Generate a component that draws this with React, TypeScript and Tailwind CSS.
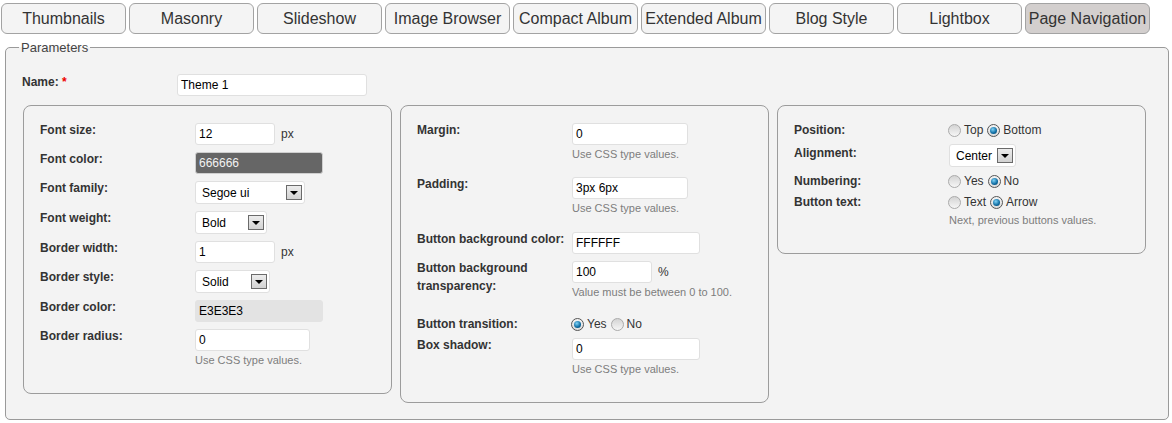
import React from 'react';

const tabs = [
  'Thumbnails',
  'Masonry',
  'Slideshow',
  'Image Browser',
  'Compact Album',
  'Extended Album',
  'Blog Style',
  'Lightbox',
  'Page Navigation',
];

const Radio = ({ checked, label }: { checked?: boolean; label: string }) => (
  <span className="mr-[4px] inline-flex items-center">
    <span
      className={`mr-[3px] inline-flex h-[13px] w-[13px] items-center justify-center rounded-full border ${
        checked
          ? 'border-[#555] bg-gradient-to-b from-[#f4f4f4] to-[#dcdcdc]'
          : 'border-[#aaa] bg-gradient-to-b from-[#d4d4d4] to-[#f6f6f6]'
      }`}
    >
      {checked && (
        <span className="h-[7px] w-[7px] rounded-full bg-[radial-gradient(circle_at_40%_35%,#7fd3f7,#0d6aa0_60%,#07405f)]" />
      )}
    </span>
    <span>{label}</span>
  </span>
);

const Arrow = () => (
  <span className="flex h-[15px] w-[16px] shrink-0 items-center justify-center border border-[#6a6a6a] bg-gradient-to-b from-[#ececec] to-[#d2d2d2]">
    <span className="h-0 w-0 border-x-[4px] border-t-[4px] border-x-transparent border-t-black" />
  </span>
);

const Input = ({ value, w, className = '' }: { value: string; w: string; className?: string }) => (
  <div
    className={`flex h-[22px] items-center rounded-[3px] border px-[3px] text-[12px] ${w} ${
      className || 'border-[#e0e0e0] bg-white text-black'
    }`}
  >
    {value}
  </div>
);

const Select = ({ value, w, tight }: { value: string; w: string; tight?: boolean }) => (
  <div
    className={`flex h-[23px] items-center rounded-[3px] border border-[#e0e0e0] bg-white pl-[6px] pr-[2px] text-[12px] text-black ${w} ${
      tight ? 'gap-[5px]' : 'justify-between'
    }`}
  >
    <span>{value}</span>
    <Arrow />
  </div>
);

const Hint = ({
  children,
  top = 'mt-[2px]',
  bottom = 'mb-[9px]',
}: {
  children: React.ReactNode;
  top?: string;
  bottom?: string;
}) => <div className={`${top} ${bottom} text-[11px] leading-[14px] text-[#7d7d7d]`}>{children}</div>;

const Row = ({
  label,
  children,
  twoLine,
  labelClass = '',
}: {
  label: React.ReactNode;
  children: React.ReactNode;
  twoLine?: boolean;
  labelClass?: string;
}) => (
  <div className="flex items-start">
    <div
      className={`w-[155px] shrink-0 text-[12px] font-bold text-[#333] ${
        twoLine ? '-mt-[2px] pr-[10px] leading-[18px]' : 'leading-[14px]'
      } ${labelClass}`}
    >
      {label}
    </div>
    <div className="text-[12px] text-[#333]">{children}</div>
  </div>
);

const RadioRow = ({ label, opts }: { label: string; opts: [string, boolean][] }) => (
  <div className="flex h-[14px] items-center">
    <div className="w-[155px] shrink-0 text-[12px] font-bold leading-[14px] text-[#333]">{label}</div>
    <div className="-ml-[1px] flex items-center text-[12px] text-[#333]">
      {opts.map(([t, c]) => (
        <Radio key={t} label={t} checked={c} />
      ))}
    </div>
  </div>
);

const Panel = ({ children }: { children: React.ReactNode }) => (
  <div className="flex w-[369px] flex-col gap-[7px] rounded-[8px] border border-[#9c9c9c] pb-[17px] pl-[16px] pt-[17px]">
    {children}
  </div>
);

export default function App() {
  return (
    <div className="min-h-[423px] bg-white font-['Liberation_Sans',Arial,sans-serif]">
      <div className="flex gap-[3px] pl-[1px] pt-[3px]">
        {tabs.map((t) => (
          <div
            key={t}
            className={`flex h-[31px] w-[125px] items-center justify-center rounded-[6px] border border-[#a3a3a3] text-[16px] text-[#333] ${
              t === 'Page Navigation' ? 'bg-[#d3cfce]' : 'bg-[#f4f4f4]'
            }`}
          >
            {t}
          </div>
        ))}
      </div>

      <fieldset className="ml-[5px] mt-[6px] w-[1164px] rounded-[5px] border border-[#9a9a9a] bg-[#f3f3f3] pb-[16px] pl-[16px] pt-[19px]">
        <legend className="-ml-[3px] px-[2px] text-[13px] leading-[15px] text-[#444]">Parameters</legend>

        <div className="mb-[9px] flex items-start">
          <div className="w-[155px] shrink-0 pt-[1px] text-[12px] font-bold leading-[14px] text-[#333]">
            Name: <span className="text-[#e00]">*</span>
          </div>
          <Input value="Theme 1" w="w-[190px]" />
        </div>

        <div className="flex items-start gap-[8px] pl-[1px]">
          <Panel>
            <Row label="Font size:">
              <div className="flex items-center gap-[6px]">
                <Input value="12" w="w-[80px]" />
                <span>px</span>
              </div>
            </Row>
            <Row label="Font color:">
              <Input value="666666" w="w-[128px]" className="border-[#cfcfcf] bg-[#666666] text-[#f2f2f2]" />
            </Row>
            <Row label="Font family:">
              <Select value="Segoe ui" w="w-[110px]" />
            </Row>
            <Row label="Font weight:">
              <Select value="Bold" w="w-[72px]" />
            </Row>
            <Row label="Border width:">
              <div className="flex items-center gap-[6px]">
                <Input value="1" w="w-[80px]" />
                <span>px</span>
              </div>
            </Row>
            <Row label="Border style:">
              <Select value="Solid" w="w-[75px]" />
            </Row>
            <Row label="Border color:">
              <Input value="E3E3E3" w="w-[128px]" className="border-[#e3e3e3] bg-[#e3e3e3] text-black" />
            </Row>
            <Row label="Border radius:">
              <Input value="0" w="w-[115px]" />
              <Hint>Use CSS type values.</Hint>
            </Row>
          </Panel>

          <Panel>
            <Row label="Margin:">
              <Input value="0" w="w-[116px]" />
              <Hint>Use CSS type values.</Hint>
            </Row>
            <Row label="Padding:">
              <Input value="3px 6px" w="w-[116px]" />
              <Hint bottom="mb-[10px]">Use CSS type values.</Hint>
            </Row>
            <Row label="Button background color:">
              <Input value="FFFFFF" w="w-[128px]" />
            </Row>
            <Row label="Button background transparency:" twoLine>
              <div className="flex items-center gap-[6px]">
                <Input value="100" w="w-[80px]" />
                <span>%</span>
              </div>
              <Hint bottom="mb-[11px]">Value must be between 0 to 100.</Hint>
            </Row>
            <RadioRow
              label="Button transition:"
              opts={[
                ['Yes', true],
                ['No', false],
              ]}
            />
            <Row label="Box shadow:">
              <Input value="0" w="w-[128px]" />
              <Hint>Use CSS type values.</Hint>
            </Row>
          </Panel>

          <Panel>
            <RadioRow
              label="Position:"
              opts={[
                ['Top', false],
                ['Bottom', true],
              ]}
            />
            <Row label="Alignment:" labelClass="pt-[2px]">
              <Select value="Center" w="w-[67px]" tight />
            </Row>
            <RadioRow
              label="Numbering:"
              opts={[
                ['Yes', false],
                ['No', true],
              ]}
            />
            <div>
              <RadioRow
                label="Button text:"
                opts={[
                  ['Text', false],
                  ['Arrow', true],
                ]}
              />
              <div className="pl-[155px]">
                <Hint top="mt-[4px]">Next, previous buttons values.</Hint>
              </div>
            </div>
          </Panel>
        </div>
      </fieldset>
    </div>
  );
}
